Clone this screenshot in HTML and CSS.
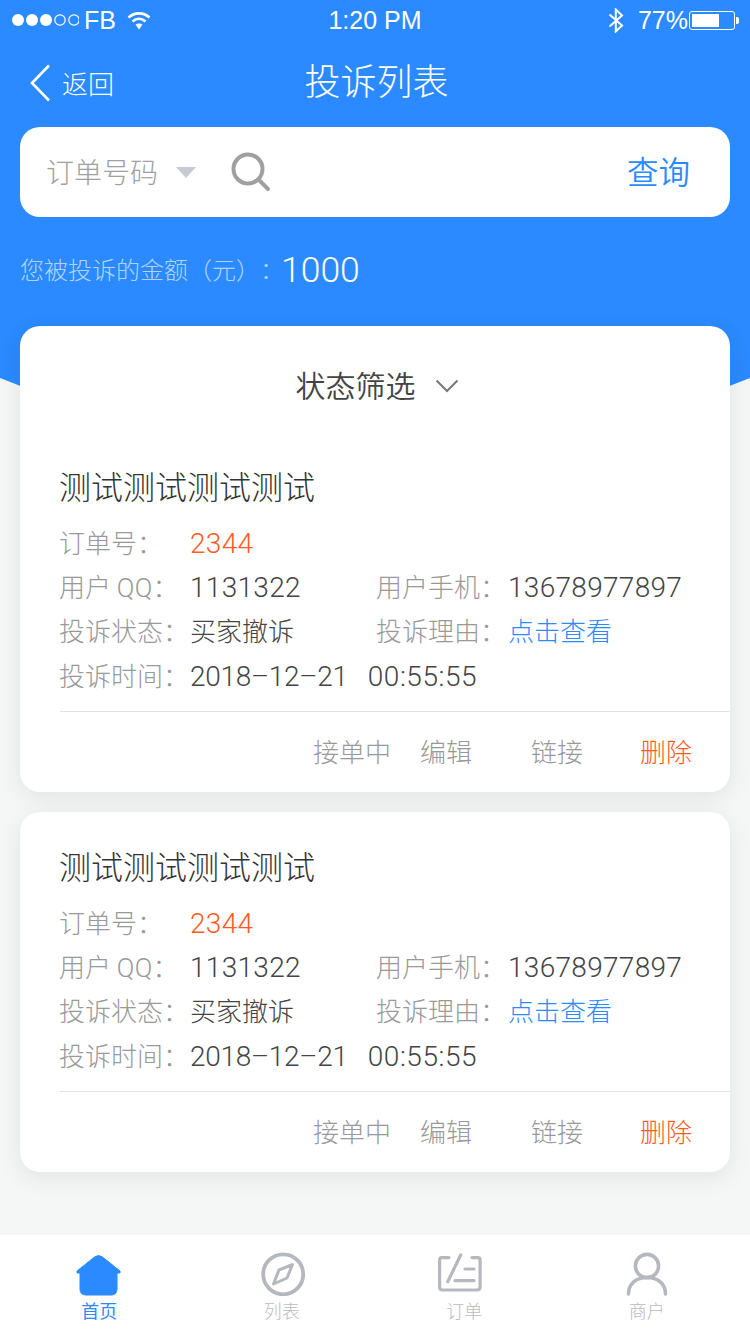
FILE: index.html
```html
<!DOCTYPE html>
<html lang="zh-CN">
<head>
  <meta charset="UTF-8" />
  <meta name="viewport" content="width=device-width, initial-scale=1.0"/>
  <title>投诉列表</title>
  <link rel="stylesheet" href="styles.css">
</head>
<body>
  <div class="page">
    <svg class="header-bg" width="750" height="460" viewBox="0 0 750 460"><path d="M0 0H750V378Q375 530 0 378Z" fill="#2b8aff"/></svg>

    <div class="status-bar">
      <div class="status-left">
        <svg class="signal" width="68" height="14" viewBox="0 0 68 14">
          <circle cx="7" cy="7" r="6" fill="#fff"/>
          <circle cx="21" cy="7" r="6" fill="#fff"/>
          <circle cx="35" cy="7" r="6" fill="#fff"/>
          <circle cx="49" cy="7" r="5.2" fill="none" stroke="#fff" stroke-width="1.2"/>
          <circle cx="63" cy="7" r="5.2" fill="none" stroke="#fff" stroke-width="1.2"/>
        </svg>
        <span class="carrier">FB</span>
        <svg class="wifi" width="24" height="19" viewBox="0 0 24 19">
          <path d="M1.5 6.5C7.5 1 16.5 1 22.5 6.5M5.5 10.5C9.5 7 14.5 7 18.5 10.5" fill="none" stroke="#fff" stroke-width="2.6"/>
          <path d="M8.5 13.5C10.5 12 13.5 12 15.5 13.5L12 18.5Z" fill="#fff"/>
        </svg>
      </div>
      <div class="status-time">1:20 PM</div>
      <div class="status-right">
        <svg class="bluetooth" width="16" height="25" viewBox="0 0 16 25">
          <path d="M1.5 6.5L14 17.5L7.8 23.5V1.5L14 7.5L1.5 18.5" fill="none" stroke="#fff" stroke-width="2"/>
        </svg>
        <span class="percent">77%</span>
        <div class="battery"><div class="battery-level"></div></div>
        <div class="battery-tip"></div>
      </div>
    </div>

    <div class="nav">
      <div class="back">
        <svg width="20" height="38" viewBox="0 0 20 38"><path d="M19 1.5L2 19L19 36.5" fill="none" stroke="#fff" stroke-width="2.6"/></svg>
        <span>返回</span>
      </div>
      <h1>投诉列表</h1>
    </div>

    <div class="search">
      <span class="search-type">订单号码</span>
      <span class="search-arrow"></span>
      <svg class="search-icon" width="40" height="40" viewBox="0 0 40 40">
        <circle cx="17" cy="17" r="14.5" fill="none" stroke="#a0a0a0" stroke-width="4"/>
        <path d="M28 28L37 37" stroke="#a0a0a0" stroke-width="4" stroke-linecap="round"/>
      </svg>
      <span class="search-btn">查询</span>
    </div>

    <div class="amount"><span class="amount-label">您被投诉的金额（元）：</span><span class="amount-value">1000</span></div>

    <div class="list">
      <div class="card">
        <div class="filter">
          <span>状态筛选</span>
          <svg width="24" height="14" viewBox="0 0 24 14"><path d="M1.5 1.5L12 12L22.5 1.5" fill="none" stroke="#777" stroke-width="2"/></svg>
        </div>
        <div class="order-title">测试测试测试测试</div>
        <div class="rows">
          <div class="label">订单号：</div><div class="value num orange">2344</div><div></div><div></div>
          <div class="label">用户 <span class="num">QQ</span>：</div><div class="value num">1131322</div><div class="label">用户手机：</div><div class="value num">13678977897</div>
          <div class="label">投诉状态：</div><div class="value text">买家撤诉</div><div class="label">投诉理由：</div><div class="value text blue">点击查看</div>
          <div class="label">投诉时间：</div><div class="value num wide"><span class="date">2018–12–21</span><span class="time">00:55:55</span></div>
        </div>
        <div class="actions">
          <span class="state">接单中</span>
          <span class="edit">编辑</span>
          <span>链接</span>
          <span class="orange">删除</span>
        </div>
      </div>

      <div class="card">
        <div class="order-title">测试测试测试测试</div>
        <div class="rows">
          <div class="label">订单号：</div><div class="value num orange">2344</div><div></div><div></div>
          <div class="label">用户 <span class="num">QQ</span>：</div><div class="value num">1131322</div><div class="label">用户手机：</div><div class="value num">13678977897</div>
          <div class="label">投诉状态：</div><div class="value text">买家撤诉</div><div class="label">投诉理由：</div><div class="value text blue">点击查看</div>
          <div class="label">投诉时间：</div><div class="value num wide"><span class="date">2018–12–21</span><span class="time">00:55:55</span></div>
        </div>
        <div class="actions">
          <span class="state">接单中</span>
          <span class="edit">编辑</span>
          <span>链接</span>
          <span class="orange">删除</span>
        </div>
      </div>
    </div>

    <div class="tabbar">
      <div class="tab active">
        <svg width="46" height="44" viewBox="0 0 46 44"><path d="M18.5 5Q22.5 2 26.5 5L44 19V21H41V37Q41 43 35 43H10Q4 43 4 37V21H1V19Z" fill="#2b8aff" stroke="#2b8aff" stroke-width="1" stroke-linejoin="round"/></svg>
        <span>首页</span>
      </div>
      <div class="tab">
        <svg width="46" height="44" viewBox="0 0 46 44">
          <circle cx="24.2" cy="22.3" r="20" fill="none" stroke="#b5b8bf" stroke-width="3.8"/>
          <path d="M33.5 12.5L28 26L14.5 32L20 18Z" fill="none" stroke="#b5b8bf" stroke-width="3" stroke-linejoin="round"/>
        </svg>
        <span>列表</span>
      </div>
      <div class="tab">
        <svg width="52" height="44" viewBox="0 0 52 44" fill="none" stroke="#b5b8bf" stroke-width="3.2" stroke-linecap="round">
          <path d="M11 5.6H4Q1.6 5.6 1.6 8V35Q1.6 38 4.6 38H39Q42.1 38 42.1 35V8Q42.1 5.6 39.7 5.6H34"/>
          <path d="M22.7 3L9.7 29.7M27 17H36M17 28.7H36"/>
        </svg>
        <span>订单</span>
      </div>
      <div class="tab">
        <svg width="46" height="44" viewBox="0 0 46 44" fill="none" stroke="#b5b8bf" stroke-width="3.6" stroke-linecap="round">
          <circle cx="23" cy="14" r="11.6"/>
          <path d="M4.5 42C4.5 31 13 25.5 23 25.5C33 25.5 41.5 31 41.5 42"/>
        </svg>
        <span>商户</span>
      </div>
    </div>
  </div>
</body>
</html>
```

FILE: styles.css
```css
* {
  margin: 0; padding: 0;
  box-sizing: border-box;
}
body {
  background-color: #f5f6f6;
  font-family: 'Noto Sans CJK SC', sans-serif;
  text-spacing-trim: space-all;
}
.page {
  position: relative;
  width: 750px;
  height: 1334px;
  overflow: hidden;
  display: flex;
  flex-direction: column;
  background-color: #f5f6f6;
}
.header-bg {
  position: absolute;
  top: 0;
  left: 0;
}
.status-bar, .nav, .search, .amount, .list {
  position: relative;
}

/* status bar */
.status-bar {
  height: 40px;
  display: flex;
  align-items: center;
  justify-content: space-between;
  color: white;
  font-family: 'Liberation Sans', sans-serif;
  font-size: 25px;
}
.status-left, .status-right {
  width: 260px;
  display: flex;
  align-items: center;
}
.status-left {
  padding-left: 11px;
}
.carrier {
  margin-left: 5px;
}
.wifi {
  margin-left: 11px;
}
.status-right {
  justify-content: flex-end;
  padding-right: 11px;
}
.percent {
  margin-left: 14px;
  margin-right: 1px;
}
.battery {
  width: 46px;
  height: 19px;
  border: 1px solid white;
  border-radius: 3px;
  padding: 2px;
}
.battery-level {
  width: 68%;
  height: 100%;
  background-color: white;
}
.battery-tip {
  width: 3px;
  height: 7px;
  margin-left: 1px;
  background-color: white;
  border-radius: 0 2px 2px 0;
}

/* nav */
.nav {
  height: 87px;
  display: flex;
  align-items: center;
  justify-content: center;
  padding: 0 0 9px 3px;
  color: white;
}
.nav h1 {
  font-size: 36px;
  font-weight: 300;
}
.back {
  position: absolute;
  left: 30px;
  top: 24px;
  display: flex;
  align-items: center;
  gap: 12px;
  font-size: 26px;
  font-weight: 300;
}
.back span {
  padding-bottom: 1px;
}

/* search */
.search {
  height: 90px;
  margin: 0 20px;
  padding: 0 40px 0 26px;
  display: flex;
  align-items: center;
  background-color: white;
  border-radius: 20px;
}
.search-type {
  padding-bottom: 3px;
  font-size: 28px;
  font-weight: 300;
  color: #a0a0a0;
}
.search-arrow {
  width: 0;
  height: 0;
  margin-left: 18px;
  border-left: 10px solid transparent;
  border-right: 10px solid transparent;
  border-top: 11px solid #c5cad5;
}
.search-icon {
  margin-left: 35px;
}
.search-btn {
  margin-left: auto;
  padding-bottom: 4px;
  font-size: 31.5px;
  font-weight: 350;
  color: #2b8aff;
}

/* amount */
.amount {
  height: 109px;
  padding: 28px 0 0 20px;
  display: flex;
  align-items: flex-start;
  font-size: 24px;
  font-weight: 300;
  line-height: 50px;
  color: rgba(255,255,255,0.65);
}
.amount-label {
  line-height: 48px;
}
.amount-value {
  margin-left: -3px;
  font-family: Roboto, sans-serif;
  font-size: 35.5px;
  color: white;
}

/* cards */
.list {
  flex: 1;
  padding: 0 20px;
  display: flex;
  flex-direction: column;
  gap: 20px;
}
.card {
  padding-top: 35px;
  background-color: white;
  border-radius: 20px;
  box-shadow: 0 6px 24px rgba(0,0,0,0.08);
}
.filter {
  margin-top: -35px;
  padding: 40px 0 61px 4px;
  display: flex;
  align-items: center;
  justify-content: center;
  gap: 19px;
  font-size: 30px;
  font-weight: 350;
  line-height: 36px;
  color: #444;
}
.filter span {
  padding-bottom: 4px;
}
.order-title {
  padding: 0 0 4px 39px;
  font-size: 32px;
  font-weight: 300;
  line-height: 36px;
  color: #333;
}
.rows {
  margin: 14px 0 13px;
  padding-left: 40px;
  display: grid;
  grid-template-columns: 130px 187px 131px 1fr;
  grid-auto-rows: 44.3px;
  align-items: center;
  font-size: 26px;
  font-weight: 300;
}
.label {
  margin-left: -1px;
  padding-bottom: 4px;
  color: #999;
  white-space: nowrap;
}
.value {
  color: #444;
  white-space: nowrap;
}
.value.text {
  padding-bottom: 4px;
}
.num {
  font-family: Roboto, sans-serif;
  font-size: 28px;
  letter-spacing: 0.3px;
}
.label .num {
  font-size: 26px;
}
.wide {
  grid-column: span 3;
  display: flex;
  gap: 20px;
}
.date {
  letter-spacing: -0.3px;
}
.time {
  letter-spacing: 0.55px;
}
.orange {
  color: #ff5a1f;
}
.blue {
  color: #2b8aff;
}
.actions {
  height: 81px;
  margin-left: 40px;
  padding: 0 38px 4px 0;
  display: flex;
  align-items: center;
  justify-content: flex-end;
  gap: 57px;
  border-top: 1px solid #e2e2e2;
  font-size: 26px;
  font-weight: 300;
  color: #999;
}
.actions .orange {
  color: #ff5a1f;
}
.actions .state {
  margin-right: -28px;
}
.actions .edit {
  margin-right: 2px;
}

/* tab bar */
.tabbar {
  position: relative;
  height: 99px;
  padding: 17px 12px 0 8px;
  display: flex;
  background-color: white;
}
.tab {
  flex: 1;
  display: flex;
  flex-direction: column;
  align-items: center;
  font-size: 18px;
  font-weight: 300;
  color: #bbb;
}
.tab span {
  margin-top: 1px;
  line-height: 26px;
}
.tab.active {
  font-weight: 400;
  color: #2b8aff;
}
```
